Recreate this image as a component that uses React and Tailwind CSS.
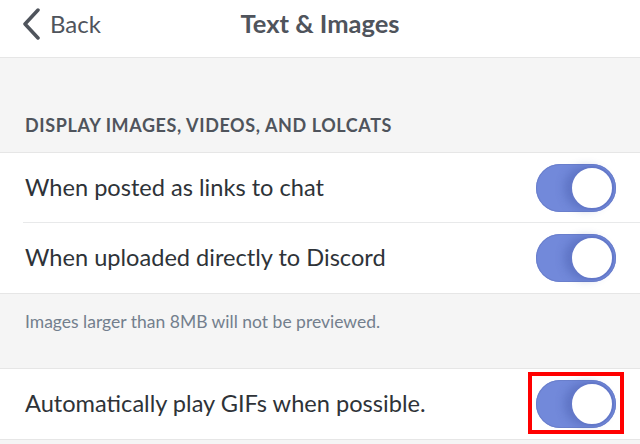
function Toggle() {
  return (
    <div className="relative h-[48px] w-[80px] rounded-full bg-[#7289da] shadow-[inset_0_0_0_1px_#6a7fcc]">
      <div className="absolute right-[2px] top-[2px] h-[44px] w-[44px] rounded-full border-[2px] border-[#6378c9] bg-white shadow-[-6px_0_8px_rgba(60,80,160,0.35)]" />
    </div>
  );
}

function Row({ label, divider }) {
  return (
    <div className="relative flex h-[70px] items-center justify-between bg-white pl-[25px] pr-[24px]">
      <span className="text-[23.6px] text-[#2e3338]">{label}</span>
      <Toggle />
      {divider && <div className="absolute bottom-0 left-[23px] right-0 h-px bg-[#e8e9ea]" />}
    </div>
  );
}

export default function App() {
  return (
    <div className="h-[444px] w-[640px] overflow-hidden bg-[#f5f5f5]" style={{ fontFamily: "Lato, 'Open Sans', sans-serif" }}>
      {/* Header */}
      <div className="relative flex h-[58px] items-center justify-center border-b border-[#e6e6e6] bg-white">
        <div className="absolute left-[21px] top-0 flex h-[48px] items-center gap-[9px]">
          <svg width="20" height="32" viewBox="0 0 20 32" fill="none">
            <path d="M17 2 L4 16 L17 30" stroke="#4f545c" strokeWidth="3.5" strokeLinecap="round" strokeLinejoin="round" />
          </svg>
          <span className="text-[24px] text-[#4f545c]">Back</span>
        </div>
        <span className="-mt-[10px] text-[25.5px] font-bold text-[#4f545c]">Text &amp; Images</span>
      </div>

      {/* Section header */}
      <div className="flex h-[95px] items-end border-b border-[#e6e6e6] pb-[13px] pl-[25px]">
        <span className="text-[18px] font-bold uppercase tracking-[0.6px] text-[#4f545c]">Display images, videos, and lolcats</span>
      </div>

      <Row label="When posted as links to chat" divider />
      <Row label="When uploaded directly to Discord" />

      {/* Note */}
      <div className="h-[76px] border-y border-[#e6e6e6] pl-[25px] pt-[15px]">
        <span className="text-[17.5px] text-[#737f8d]">Images larger than 8MB will not be previewed.</span>
      </div>

      <div className="relative flex h-[71px] items-center justify-between border-b border-[#e6e6e6] bg-white pl-[25px] pr-[24px]">
        <span className="text-[23.6px] text-[#2e3338]">Automatically play GIFs when possible.</span>
        <div className="absolute right-[16px] top-[3px] h-[62px] w-[96px] border-[4px] border-[#ff0000]" />
        <Toggle />
      </div>
    </div>
  );
}
